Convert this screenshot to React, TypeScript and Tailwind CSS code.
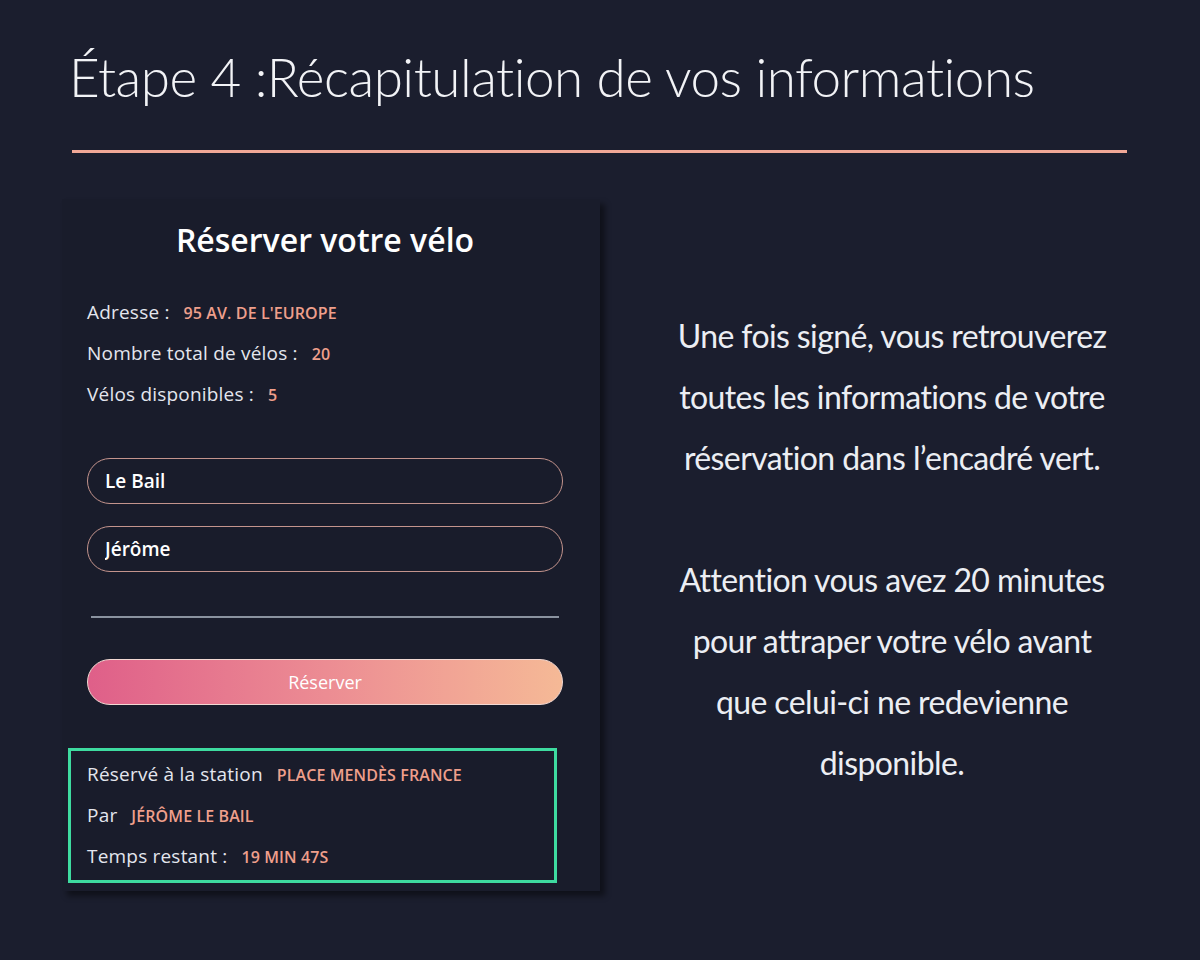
import React from 'react';

const infoRows = [
  { label: 'Adresse :', value: "95 AV. DE L'EUROPE" },
  { label: 'Nombre total de vélos :', value: '20' },
  { label: 'Vélos disponibles :', value: '5' },
];

const bookingRows = [
  { label: 'Réservé à la station', value: 'PLACE MENDÈS FRANCE' },
  { label: 'Par', value: 'JÉRÔME LE BAIL' },
  { label: 'Temps restant :', value: '19 MIN 47S' },
];

const sans = { fontFamily: '"Open Sans", "Noto Sans", sans-serif' };

const Row = ({ label, value }: { label: string; value: string }) => (
  <div className="flex items-center h-[41px] gap-[14px]">
    <span className="text-[19px] tracking-[0.2px] text-[#e4e6ee]">{label}</span>
    <span className="text-[16px] font-semibold tracking-[0.1px] text-[#ef9f8b]">{value}</span>
  </div>
);

export default function App() {
  return (
    <div className="min-h-[960px] w-full bg-[#1b1e2e] text-white">
      <header className="pt-[44px] pl-[69px] pr-[72px]">
        <h1
          className="text-[53px] font-light leading-[66px] text-[#f2f3f6] tracking-[-0.5px]"
          style={{ fontFamily: 'Lato, "Open Sans", sans-serif' }}
        >
          Étape 4 :Récapitulation de vos informations
        </h1>
        <div className="mt-[40px] ml-[3px] mr-[1px] h-[3px] bg-[#f1a897]" />
      </header>

      <main className="flex pt-[46px] pl-[62px]">
        {/* carte de réservation */}
        <section
          className="w-[538px] pb-[8px] bg-[#191c2b] shadow-[5px_5px_6px_rgba(0,0,0,0.45)]"
          style={sans}
        >
          <div className="pl-[25px] w-[501px]">
            <h2 className="pt-[21px] h-[60px] text-center text-[32px] font-semibold leading-[40px] text-white">
              Réserver votre vélo
            </h2>
            <div className="mt-[33px]">
              {infoRows.map(r => (
                <Row key={r.label} {...r} />
              ))}
            </div>

            <div className="mt-[43px] flex flex-col gap-[22px]">
              <input
                readOnly
                value="Le Bail"
                className="h-[46px] rounded-full border-[1.5px] border-[#c4948d] bg-transparent px-[17px] text-[19px] font-semibold text-white outline-none"
              />
              <input
                readOnly
                value="Jérôme"
                className="h-[46px] rounded-full border-[1.5px] border-[#c4948d] bg-transparent px-[17px] text-[19px] font-semibold text-white outline-none"
              />
            </div>

            <div className="mt-[44px] mx-[4px] h-[2px] bg-[#8a929f]" />

            <button className="mt-[41px] w-full h-[46px] rounded-full border border-[#f3d9d3] bg-gradient-to-r from-[#df5f89] via-[#ec8c93] to-[#f5b996] text-[18px] text-white">
              Réserver
            </button>
          </div>

          <div className="mt-[43px] ml-[6px] w-[489px] border-[3px] border-[#3edba0] py-[3px] pl-[16px]">
            {bookingRows.map(r => (
              <Row key={r.label} {...r} />
            ))}
          </div>
        </section>

        {/* texte explicatif */}
        <aside
          className="w-[584px] pt-[106px] text-center text-[32px] leading-[61px] text-[#eceef3] tracking-[-0.6px]"
          style={{ fontFamily: 'Lato, "Open Sans", sans-serif' }}
        >
          <p>
            Une fois signé, vous retrouverez
            <br />
            toutes les informations de votre
            <br />
            réservation dans l’encadré vert.
          </p>
          <p className="mt-[61px]">
            Attention vous avez 20 minutes
            <br />
            pour attraper votre vélo avant
            <br />
            que celui-ci ne redevienne
            <br />
            disponible.
          </p>
        </aside>
      </main>
    </div>
  );
}
